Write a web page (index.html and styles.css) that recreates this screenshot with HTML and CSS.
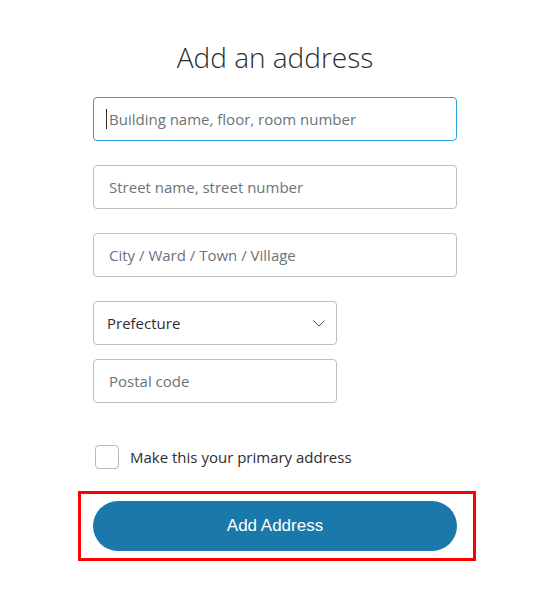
FILE: index.html
```html
<!DOCTYPE html>
<html lang="en">
<head>
  <meta charset="UTF-8">
  <title>Add an address</title>
  <link rel="stylesheet" href="styles.css">
</head>
<body>
  <form class="address-form">
    <h1>Add an address</h1>

    <div class="field field-focused">
      <span class="caret"></span>
      <input type="text" name="line1" placeholder="Building name, floor, room number">
    </div>

    <div class="field">
      <input type="text" name="line2" placeholder="Street name, street number">
    </div>

    <div class="field">
      <input type="text" name="city" placeholder="City / Ward / Town / Village">
    </div>

    <div class="field field-half select-field">
      <select name="prefecture">
        <option>Prefecture</option>
      </select>
      <svg class="chevron" width="12" height="7" viewBox="0 0 12 7">
        <path d="M0.5 0.5 L6 6 L11.5 0.5" fill="none" stroke="#4a4f52" stroke-width="1"/>
      </svg>
    </div>

    <div class="field field-half field-tight">
      <input type="text" name="postal" placeholder="Postal code">
    </div>

    <label class="check-row">
      <span class="check-box"></span>
      <span>Make this your primary address</span>
    </label>

    <div class="submit-wrap">
      <button type="button" class="submit-btn">Add Address</button>
    </div>
  </form>
</body>
</html>
```

FILE: styles.css
```css
body {
  margin: 0;
  background-color: white;
  font-family: "Open Sans", "Noto Sans", sans-serif;
  color: #2c2e2f;
}

.address-form {
  width: 364px;
  margin-left: 93px;
  padding-top: 37px;
}

h1 {
  margin: 0 0 20px 0;
  text-align: center;
  font-weight: 300;
  font-size: 28px;
  line-height: 40px;
  color: #2c2e2f;
}

.field {
  position: relative;
  height: 44px;
  margin-bottom: 24px;
}

.field-half {
  width: 244px;
}

.field-tight {
  margin-bottom: 0;
}

.select-field {
  margin-bottom: 14px;
}

input, select {
  box-sizing: border-box;
  width: 100%;
  height: 44px;
  padding: 0 15px;
  border: 1px solid #b9bfc3;
  border-radius: 4px;
  font-family: inherit;
  font-size: 15px;
  color: #2c2e2f;
  background: white;
  outline: none;
}

input::placeholder {
  color: #6c7378;
}

select {
  appearance: none;
  -webkit-appearance: none;
  padding-left: 13px;
  color: #2c2e2f;
}

.field-focused input {
  border-color: #2a9ee0;
}

.caret {
  position: absolute;
  left: 13px;
  top: 12px;
  width: 1px;
  height: 20px;
  background: #2c2e2f;
}

.chevron {
  position: absolute;
  right: 12px;
  top: 19px;
  pointer-events: none;
}

.check-row {
  display: flex;
  align-items: center;
  gap: 11px;
  margin-top: 42px;
  margin-left: 2px;
  font-size: 15px;
  color: #2c2e2f;
}

.check-box {
  box-sizing: border-box;
  width: 24px;
  height: 24px;
  border: 1px solid #b3b9bd;
  border-radius: 4px;
}

.submit-wrap {
  margin: 22px -19px 0 -15px;
  padding: 7px 16px 7px 12px;
  border: 3px solid #ff0000;
}

.submit-btn {
  display: block;
  width: 364px;
  height: 50px;
  border: none;
  border-radius: 25px;
  background-color: #1a78aa;
  color: white;
  font-family: "Liberation Sans", Arial, sans-serif;
  font-size: 17px;
}
```
